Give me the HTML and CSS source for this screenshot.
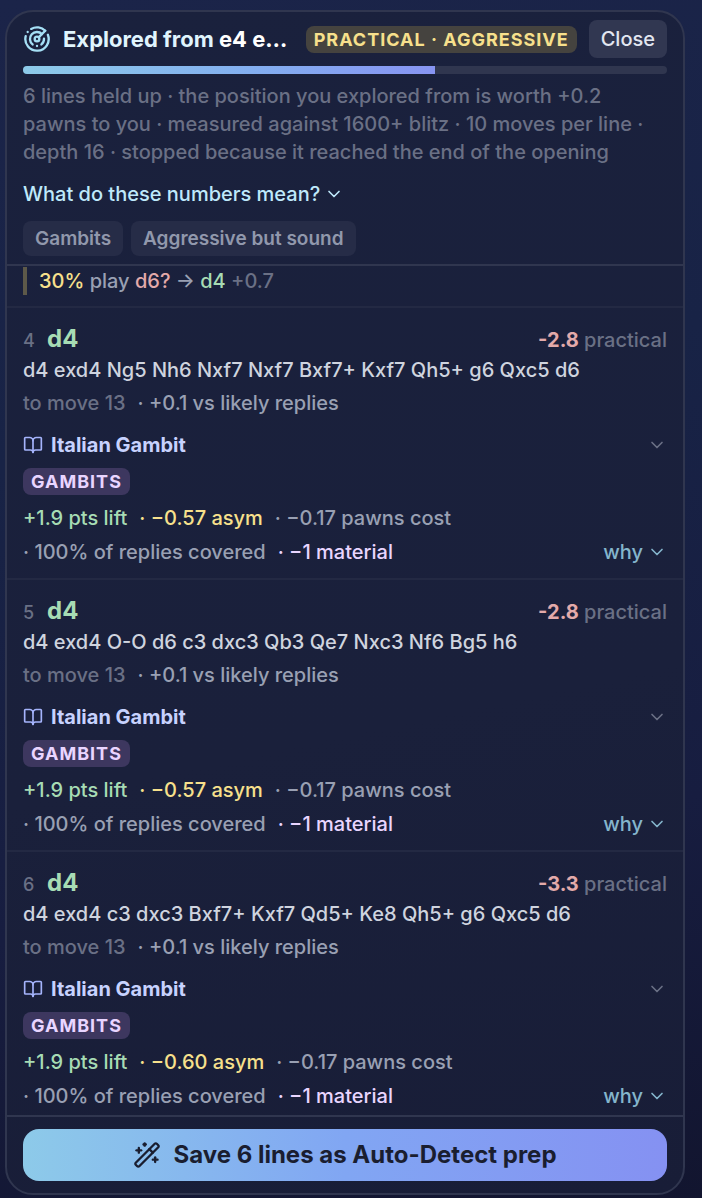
FILE: index.html
```html
<!DOCTYPE html>
<html lang="en">
<head>
<meta charset="utf-8">
<meta name="viewport" content="width=device-width, initial-scale=1">
<title>Explored lines</title>
<link rel="stylesheet" href="styles.css">
</head>
<body>
<svg class="sprite" aria-hidden="true">
  <symbol id="chevron" viewBox="0 0 24 24"><path d="m6 9 6 6 6-6"/></symbol>
  <symbol id="book" viewBox="0 0 24 24"><path d="M12 7v14"/><path d="M3 18a1 1 0 0 1-1-1V4a1 1 0 0 1 1-1h5a4 4 0 0 1 4 4 4 4 0 0 1 4-4h5a1 1 0 0 1 1 1v13a1 1 0 0 1-1 1h-6a3 3 0 0 0-3 3 3 3 0 0 0-3-3z"/></symbol>
</svg>
<main class="card">
  <header class="head">
    <div class="title-row">
      <svg class="icon icon-lg" viewBox="0 0 24 24" aria-hidden="true"><path d="M19.07 4.93A10 10 0 0 0 6.99 3.34"/><path d="M4 6h.01"/><path d="M2.29 9.62A10 10 0 1 0 21.31 8.35"/><path d="M16.24 7.76A6 6 0 1 0 8.23 16.67"/><path d="M12 18h.01"/><path d="M17.99 11.66A6 6 0 0 1 15.77 16.67"/><circle cx="12" cy="12" r="2"/><path d="m13.41 10.59 5.66-5.66"/></svg>
      <h1 class="title">Explored from <span class="title-move">e4 e…</span></h1>
      <span class="badge badge-style">PRACTICAL · AGGRESSIVE</span>
      <button class="close" type="button">Close</button>
    </div>
    <div class="progress"><div class="progress-fill"></div></div>
    <p class="summary">6 lines held up · the position you explored from is worth +0.2 pawns to you · measured against 1600+ blitz · 10 moves per line · depth 16 · stopped because it reached the end of the opening</p>
    <button class="explain" type="button">What do these numbers mean? <svg class="icon icon-sm"><use href="#chevron"/></svg></button>
    <div class="filters">
      <button class="chip" type="button">Gambits</button>
      <button class="chip" type="button">Aggressive but sound</button>
    </div>
  </header>

  <section class="lines">
    <div class="tail">
      <p class="reply"><span class="yellow">30%</span> play <span class="red">d6?</span> → <span class="green">d4</span> <span class="dim">+0.7</span></p>
    </div>

    <article class="line">
      <div class="line-top"><span class="rank">4</span><h2 class="move">d4</h2><span class="score"><b class="red">-2.8</b> practical</span></div>
      <p class="moves">d4 exd4 Ng5 Nh6 Nxf7 Nxf7 Bxf7+ Kxf7 Qh5+ g6 Qxc5 d6</p>
      <p class="facts"><span class="dim">to move 13</span><span>· +0.1 vs likely replies</span></p>
      <button class="opening" type="button"><svg class="icon icon-book"><use href="#book"/></svg><span class="opening-name">Italian Gambit</span><svg class="icon icon-sm"><use href="#chevron"/></svg></button>
      <span class="badge badge-gambit">GAMBITS</span>
      <div class="stats"><span class="green">+1.9 pts lift</span><span class="yellow">· −0.57 asym</span><span>· −0.17 pawns cost</span><span>· 100% of replies covered</span><span class="pink">· −1 material</span><button class="why" type="button">why <svg class="icon icon-sm"><use href="#chevron"/></svg></button></div>
    </article>

    <article class="line">
      <div class="line-top"><span class="rank">5</span><h2 class="move">d4</h2><span class="score"><b class="red">-2.8</b> practical</span></div>
      <p class="moves">d4 exd4 O-O d6 c3 dxc3 Qb3 Qe7 Nxc3 Nf6 Bg5 h6</p>
      <p class="facts"><span class="dim">to move 13</span><span>· +0.1 vs likely replies</span></p>
      <button class="opening" type="button"><svg class="icon icon-book"><use href="#book"/></svg><span class="opening-name">Italian Gambit</span><svg class="icon icon-sm"><use href="#chevron"/></svg></button>
      <span class="badge badge-gambit">GAMBITS</span>
      <div class="stats"><span class="green">+1.9 pts lift</span><span class="yellow">· −0.57 asym</span><span>· −0.17 pawns cost</span><span>· 100% of replies covered</span><span class="pink">· −1 material</span><button class="why" type="button">why <svg class="icon icon-sm"><use href="#chevron"/></svg></button></div>
    </article>

    <article class="line">
      <div class="line-top"><span class="rank">6</span><h2 class="move">d4</h2><span class="score"><b class="red">-3.3</b> practical</span></div>
      <p class="moves">d4 exd4 c3 dxc3 Bxf7+ Kxf7 Qd5+ Ke8 Qh5+ g6 Qxc5 d6</p>
      <p class="facts"><span class="dim">to move 13</span><span>· +0.1 vs likely replies</span></p>
      <button class="opening" type="button"><svg class="icon icon-book"><use href="#book"/></svg><span class="opening-name">Italian Gambit</span><svg class="icon icon-sm"><use href="#chevron"/></svg></button>
      <span class="badge badge-gambit">GAMBITS</span>
      <div class="stats"><span class="green">+1.9 pts lift</span><span class="yellow">· −0.60 asym</span><span>· −0.17 pawns cost</span><span>· 100% of replies covered</span><span class="pink">· −1 material</span><button class="why" type="button">why <svg class="icon icon-sm"><use href="#chevron"/></svg></button></div>
    </article>
  </section>

  <footer class="foot">
    <button class="save" type="button"><svg class="icon icon-lg" viewBox="0 0 24 24" aria-hidden="true"><path d="m21.64 3.64-1.28-1.28a1.21 1.21 0 0 0-1.72 0L2.36 18.64a1.21 1.21 0 0 0 0 1.72l1.28 1.28a1.2 1.2 0 0 0 1.72 0L21.64 5.36a1.2 1.2 0 0 0 0-1.72"/><path d="m14 7 3 3"/><path d="M5 6v4"/><path d="M19 14v4"/><path d="M10 2v2"/><path d="M7 8H3"/><path d="M21 16h-4"/><path d="M11 3H9"/></svg>Save 6 lines as Auto-Detect prep</button>
  </footer>
</main>
</body>
</html>
```
FILE: styles.css
```css
* { box-sizing: border-box; }
body {
  margin: 0;
  min-height: 100vh;
  padding: 10px 17px 3px 5px;
  background: linear-gradient(168deg, #1b2449 0%, #182346 35%, #171d40 70%, #12152f 100%);
  color: #99a0b3;
  font: 500 20px/28px Inter, "Noto Sans", sans-serif;
}
h1, h2, p { margin: 0; font-size: inherit; }
button {
  margin: 0;
  padding: 0;
  border: 0;
  background: none;
  color: inherit;
  font: inherit;
  text-align: left;
  cursor: pointer;
}
.sprite { display: none; }
.icon {
  flex: none;
  fill: none;
  stroke: currentColor;
  stroke-width: 2;
  stroke-linecap: round;
  stroke-linejoin: round;
}
.icon-lg { width: 28px; height: 28px; }
.icon-book { width: 20px; height: 20px; color: #a5b4fc; }
.icon-sm { width: 20px; height: 20px; }

.card {
  overflow: hidden;
  border: 2px solid #30364f;
  border-radius: 28px;
  background: linear-gradient(168deg, #1a213d, #1a203b 60%, #181d37);
}
.head { padding: 8px 16px; border-bottom: 2px solid #30364f; }
.title-row { display: flex; align-items: center; color: #a5dff5; }
.title {
  flex: 1;
  min-width: 0;
  margin: 0 12px;
  overflow: hidden;
  text-overflow: ellipsis;
  white-space: nowrap;
  color: #e0f5fe;
  font-size: 22px;
  font-weight: 700;
}
.title-move { color: #fff; }
.badge {
  display: block;
  width: fit-content;
  padding: 0 8px;
  border-radius: 8px;
  font-size: 18px;
  font-weight: 700;
  line-height: 27px;
  letter-spacing: 1px;
  white-space: nowrap;
}
.badge-style { background: #45433f; color: #f7e08c; }
.badge-gambit { background: #3d375f; color: #e9d5ff; }
.close {
  margin-left: 12px;
  padding: 5px 12px;
  border-radius: 8px;
  background: #313751;
  color: #e2e6f0;
}
.progress {
  height: 8px;
  margin: 8px 0;
  overflow: hidden;
  border-radius: 4px;
  background: #30364f;
}
.progress-fill { width: 64%; height: 100%; background: linear-gradient(90deg, #8dcae9, #83aff0 55%, #8794f2); }
.summary { color: #6a7085; }
.explain { display: flex; align-items: center; gap: 4px; margin-top: 14px; color: #bfe9fb; }
.filters { display: flex; flex-wrap: wrap; gap: 8px; margin-top: 13px; }
.chip {
  padding: 4px 12px;
  border-radius: 8px;
  background: #262c47;
  color: #9198ac;
  font-size: 19px;
  font-weight: 600;
  line-height: 27px;
}

.tail { padding: 1px 16px 11px; }
.reply { padding-left: 12px; border-left: 4px solid #5d5949; }
.line { padding: 16px 16px 12px; border-top: 2px solid #232943; }
.line:last-child { padding-bottom: 5px; }
.line-top { display: flex; align-items: baseline; line-height: 30px; }
.rank { width: 24px; color: #6a7085; font-size: 18px; }
.move { color: #a7dcb4; font-size: 24px; font-weight: 700; }
.score { margin-left: auto; color: #6a7085; }
.score b { font-weight: 700; }
.moves { color: #cfd4df; }
.facts { display: flex; gap: 12px; margin-top: 5px; }
.opening { display: flex; align-items: center; gap: 8px; width: 100%; margin-top: 14px; color: #6a7085; }
.opening-name { flex: 1; color: #c7d2fe; font-weight: 700; }
.badge-gambit { margin-top: 9px; }
.stats { display: flex; flex-wrap: wrap; gap: 6px 12px; margin-top: 9px; }
.why { display: flex; align-items: center; gap: 4px; margin-left: auto; color: #84b5cc; }
.green { color: #a7dcb4; }
.yellow { color: #f7e08c; }
.red { color: #e3aaaa; }
.pink { color: #e9d5ff; }
.dim { color: #6a7085; }

.foot { padding: 12px 16px; border-top: 2px solid #30364f; }
.save {
  display: flex;
  align-items: center;
  justify-content: center;
  gap: 12px;
  width: 100%;
  padding: 12px;
  border-radius: 16px;
  background: linear-gradient(90deg, #8dcae9, #81a6f3 50%, #8591f2);
  color: #1a1e30;
  font-size: 24px;
  font-weight: 700;
}
```
